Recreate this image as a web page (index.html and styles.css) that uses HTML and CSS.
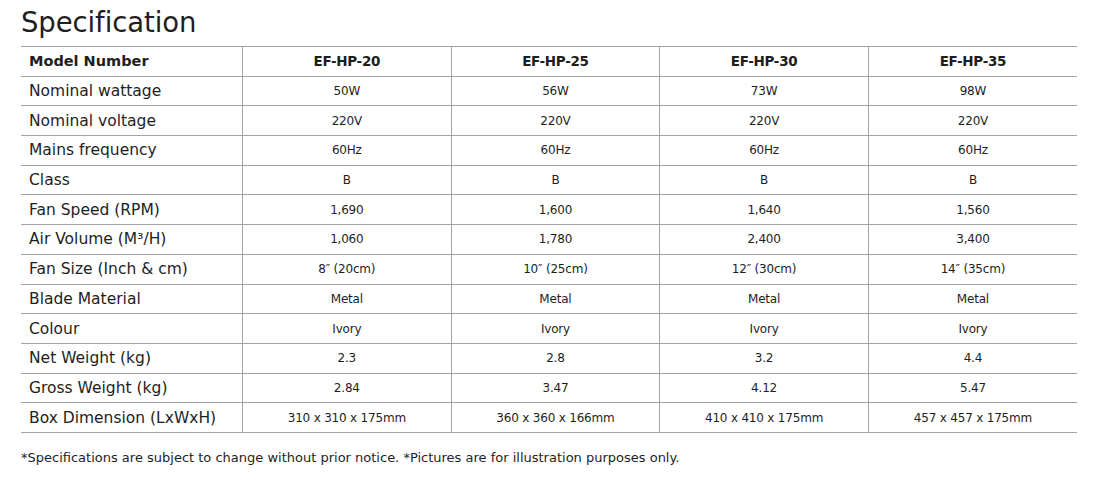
FILE: index.html
```
<!DOCTYPE html>
<html>
<head>
<meta charset="utf-8">
<link rel="stylesheet" href="styles.css">
</head>
<body>
<div class="page">
  <h1 class="title">Specification</h1>
  <table class="spec">
    <thead>
      <tr><th class="label">Model Number</th><th>EF-HP-20</th><th>EF-HP-25</th><th>EF-HP-30</th><th>EF-HP-35</th></tr>
    </thead>
    <tbody>
      <tr><td class="label">Nominal wattage</td><td>50W</td><td>56W</td><td>73W</td><td>98W</td></tr>
      <tr><td class="label">Nominal voltage</td><td>220V</td><td>220V</td><td>220V</td><td>220V</td></tr>
      <tr><td class="label">Mains frequency</td><td>60Hz</td><td>60Hz</td><td>60Hz</td><td>60Hz</td></tr>
      <tr><td class="label">Class</td><td>B</td><td>B</td><td>B</td><td>B</td></tr>
      <tr><td class="label">Fan Speed (RPM)</td><td>1,690</td><td>1,600</td><td>1,640</td><td>1,560</td></tr>
      <tr><td class="label">Air Volume (M³/H)</td><td>1,060</td><td>1,780</td><td>2,400</td><td>3,400</td></tr>
      <tr><td class="label">Fan Size (Inch &amp; cm)</td><td>8″ (20cm)</td><td>10″ (25cm)</td><td>12″ (30cm)</td><td>14″ (35cm)</td></tr>
      <tr><td class="label">Blade Material</td><td>Metal</td><td>Metal</td><td>Metal</td><td>Metal</td></tr>
      <tr><td class="label">Colour</td><td>Ivory</td><td>Ivory</td><td>Ivory</td><td>Ivory</td></tr>
      <tr><td class="label">Net Weight (kg)</td><td>2.3</td><td>2.8</td><td>3.2</td><td>4.4</td></tr>
      <tr><td class="label">Gross Weight (kg)</td><td>2.84</td><td>3.47</td><td>4.12</td><td>5.47</td></tr>
      <tr><td class="label">Box Dimension (LxWxH)</td><td>310 x 310 x 175mm</td><td>360 x 360 x 166mm</td><td>410 x 410 x 175mm</td><td>457 x 457 x 175mm</td></tr>
    </tbody>
  </table>
  <p class="note">*Specifications are subject to change without prior notice. *Pictures are for illustration purposes only.</p>
</div>
</body>
</html>
```

FILE: styles.css
```
html, body {
  margin: 0;
  padding: 0;
  background: #ffffff;
}
body {
  font-family: "DejaVu Sans", "Liberation Sans", sans-serif;
  color: #1e1e1e;
}
.page {
  padding: 3px 37px 0 21px;
}
.title {
  margin: 0;
  font-size: 27.5px;
  font-weight: 400;
  line-height: 38px;
  height: 43px;
  letter-spacing: -0.1px;
}
.spec {
  width: 1056px;
  border-collapse: collapse;
  table-layout: fixed;
}
.spec th, .spec td {
  height: 28.7px;
  padding: 0;
  border-top: 1px solid #a4a4a4;
  border-bottom: 1px solid #a4a4a4;
  border-left: 1px solid #a4a4a4;
  text-align: center;
  font-size: 12px;
  font-weight: 400;
  white-space: nowrap;
  letter-spacing: -0.2px;
}
.spec th {
  font-weight: 700;
  font-size: 13.5px;
  letter-spacing: -0.3px;
}
.spec th:first-child, .spec td:first-child {
  border-left: none;
  width: 213px;
}
.spec th.label {
  text-align: left;
  padding-left: 8px;
  font-size: 14.5px;
  letter-spacing: 0;
}
.spec td.label {
  text-align: left;
  padding-left: 8px;
  font-size: 15.5px;
  letter-spacing: 0;
}
.note {
  margin: 17px 0 0 0;
  font-size: 13px;
}
```
